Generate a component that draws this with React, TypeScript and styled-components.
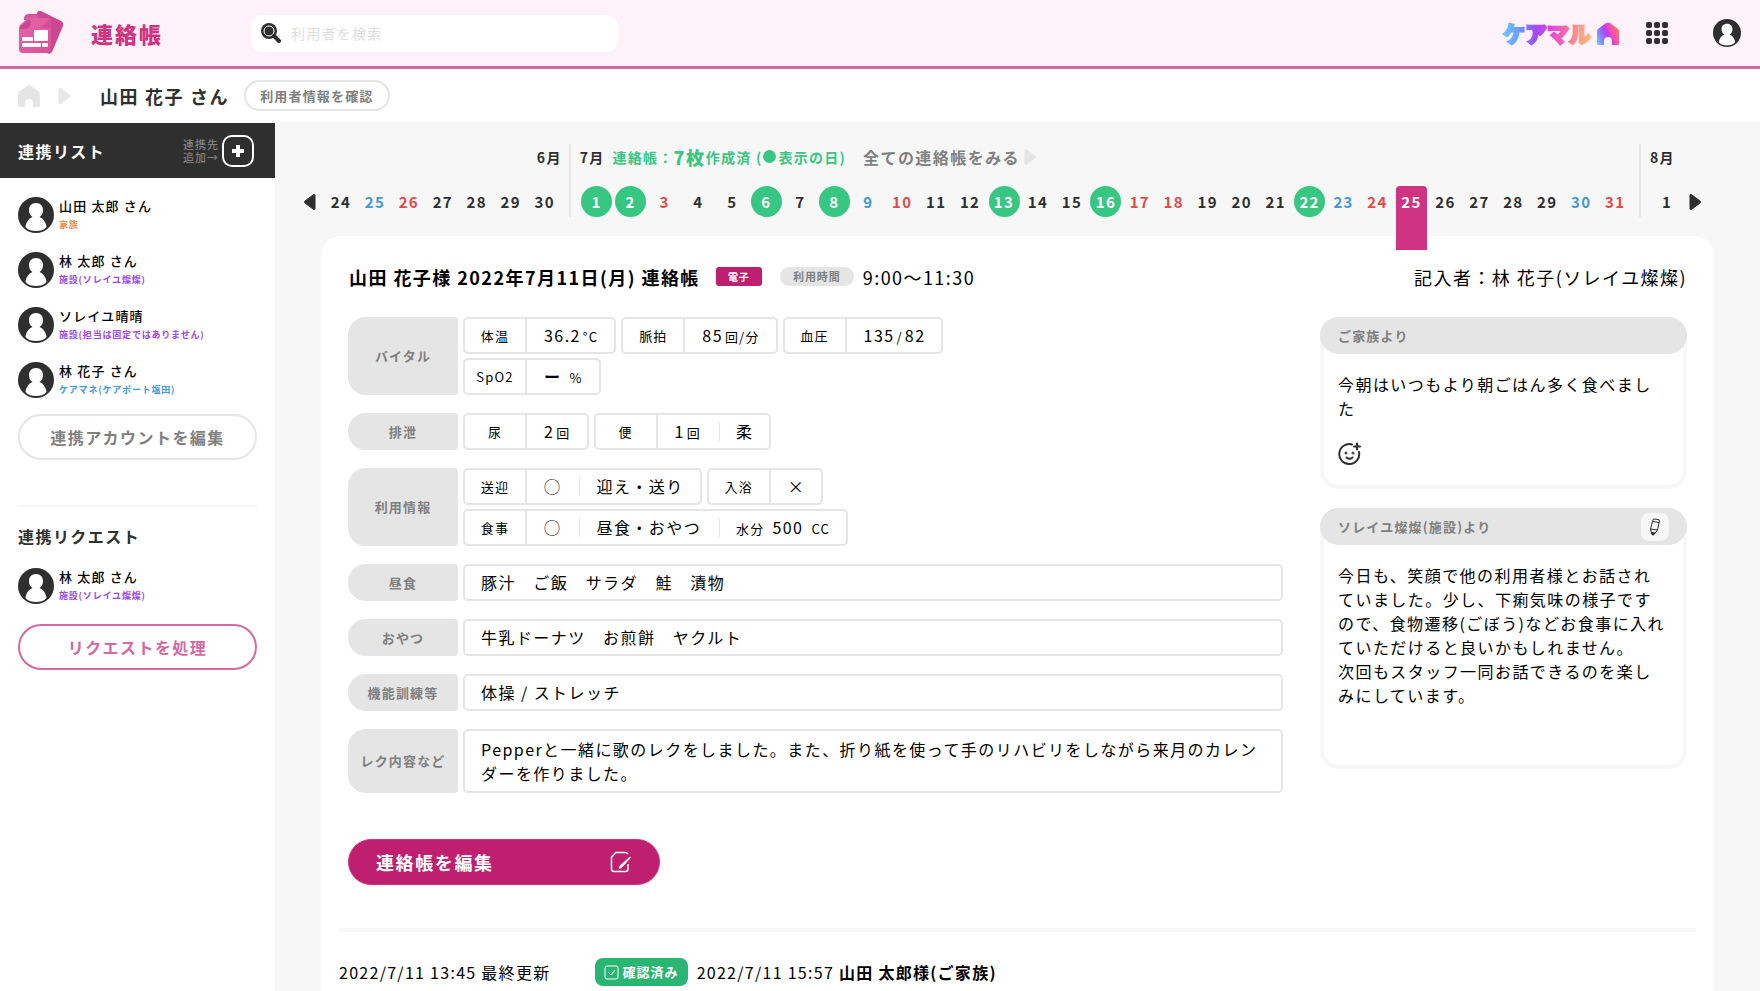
import React from "react";
import styled, { createGlobalStyle, css } from "styled-components";

const color = {
  ink: "#2f2f2f",
  gray: "#808080",
  line: "#e5e5e5",
  pale: "#f7f7f7",
  pink: "#cf3482",
  deepPink: "#be206f",
  softPink: "#d469a1",
  green: "#37c782",
  blue: "#4299d5",
  red: "#e04a48",
  purple: "#a044ee",
  orange: "#ee8d3c",
};

const GlobalStyle = createGlobalStyle`
  * { box-sizing: border-box; letter-spacing: 0.09em; }
  body {
    margin: 0;
    background: #fff;
    color: #000;
    font-family: "Noto Sans CJK JP", "Noto Sans", sans-serif;
    font-size: 16px;
    line-height: 24px;
  }
  button, input { font-family: inherit; color: inherit; }
  button { padding: 0; border: 0; background: none; cursor: pointer; }
  a { color: inherit; text-decoration: none; }
  h1, h2, h3, p, ul, dl, dd { margin: 0; padding: 0; font-size: inherit; font-weight: inherit; }
  ul { list-style: none; }
  svg { display: block; flex: none; }
`;

/* ---------- icons ---------- */

const AppLogo = () => (
  <svg width="46" height="46" viewBox="0 0 46 46" aria-hidden="true">
    <defs>
      <linearGradient id="sheet" x1="0" y1="0" x2="1" y2="1">
        <stop offset="0" stopColor="#e566a6" />
        <stop offset="1" stopColor="#d9509a" />
      </linearGradient>
    </defs>
    <path d="M18 3 q1-3 4-2 L42 11 q3 2 2 5 L33 42 q-2 3-5 1 L14 20 Z" fill="#cb4790" />
    <path d="M5 9 q0-5 5-5 h8 l4 6 H5 Z" fill="#d3559a" />
    <path d="M9 8 H28 q4 0 4 4 V39 q0 4-4 4 H4 q-4 0-4-4 V18 q0-2 1-3 Z" fill="url(#sheet)" />
    <path d="M10 9 q3 3 1 7 q-2 3-6 3 H1 q0-2 1-3 Z" fill="#c94590" />
    <path d="M21 18 L31 9 q1 1 1 3 v6 Z" fill="#cf4d95" opacity="0.7" />
    <rect x="15" y="20" width="14" height="11" rx="1" fill="#fff" />
    <rect x="3" y="27" width="11" height="4" rx="1" fill="#fff" />
    <rect x="3" y="33" width="19" height="4" rx="1" fill="#fff" />
    <rect x="23" y="33" width="6" height="4" rx="1" fill="#fff" />
  </svg>
);

const SearchIcon = () => (
  <svg width="20" height="20" viewBox="0 0 20 20" aria-hidden="true">
    <circle cx="8" cy="8" r="8" fill={color.ink} />
    <circle cx="8" cy="8" r="5" fill="none" stroke="#fff" strokeWidth="1" />
    <path d="M13 13 L18 18" stroke={color.ink} strokeWidth="4" strokeLinecap="round" />
  </svg>
);

const BrandText = styled.text`
  font-size: 22px;
  font-weight: 900;
  letter-spacing: 0;
  fill: url(#word);
  stroke: url(#word);
  stroke-width: 2px;
`;

const BrandMark = () => (
  <svg width="120" height="40" viewBox="-2 -7 120 40" role="img" aria-label="ケアマル">
    <defs>
      <linearGradient id="word" gradientUnits="userSpaceOnUse" x1="0" y1="8" x2="90" y2="14">
        <stop offset="0" stopColor="#6cc8ff" />
        <stop offset="0.2" stopColor="#6f95fb" />
        <stop offset="0.36" stopColor="#a04cf4" />
        <stop offset="0.52" stopColor="#dc46dc" />
        <stop offset="0.7" stopColor="#fa6aa6" />
        <stop offset="0.85" stopColor="#fb9c8c" />
        <stop offset="1" stopColor="#fbc06f" />
      </linearGradient>
      <linearGradient id="roof" x1="0" y1="1" x2="1" y2="0.6">
        <stop offset="0" stopColor="#67dcfd" />
        <stop offset="0.3" stopColor="#8a7bfd" />
        <stop offset="0.55" stopColor="#b83cf6" />
        <stop offset="0.8" stopColor="#fb4fb0" />
        <stop offset="1" stopColor="#fc6a70" />
      </linearGradient>
    </defs>
    <BrandText x="0" y="22">ケアマル</BrandText>
    <path
      d="M95 25 q-1 0-1-1 V11 q0-1 1-2 L103 3 q2-1 4 0 L115 9 q1 1 1 2 V24 q0 1-1 1 H109 V21 a4 4 0 0 0 -8 0 V25 Z"
      fill="url(#roof)"
    />
  </svg>
);

const AppsIcon = () => (
  <svg width="24" height="24" viewBox="0 0 24 24" fill={color.ink} aria-hidden="true">
    {[1, 9, 17].flatMap((y) => [1, 9, 17].map((x) => <rect key={`${x}-${y}`} x={x} y={y} width="6" height="6" rx="2" />))}
  </svg>
);

const PersonIcon = ({ size }: { size: number }) => (
  <svg width={size} height={size} viewBox="0 0 36 36" aria-hidden="true">
    <circle cx="18" cy="18" r="18" fill={color.ink} />
    <path
      d="M18 6 C13.500 6 11 9 11 13 C11 16 12 18.500 14.500 20 C10.500 21.500 8 25.500 7.500 30 C10 33 14 34 18 34 C22 34 26 33 28.500 30 C28 25.500 25.500 21.500 21.500 20 C24 18.500 25 16 25 13 C25 9 22.500 6 18 6 Z"
      fill="#fff"
    />
  </svg>
);

const HomeIcon = () => (
  <svg width="22" height="22" viewBox="0 0 22 22" fill={color.line} aria-hidden="true">
    <path d="M9 1 q2-2 4 0 L20 6 q2 1 2 4 V20 q0 2-2 2 H15 V18 a4 4 0 0 0 -8 0 V22 H2 q-2 0-2-2 V10 q0-3 2-4 Z" />
  </svg>
);

const Triangle = ({ fill, flip }: { fill: string; flip?: boolean }) => (
  <svg width="13" height="18" viewBox="0 0 13 18" aria-hidden="true">
    <path
      d={flip ? "M12 2 v14 q-1 1-2 0 L2 10 q-1-1 0-2 L10 2 q1-1 2 0 Z" : "M1 2 v14 q1 1 2 0 L11 10 q1-1 0-2 L3 2 q-1-1-2 0 Z"}
      fill={fill}
      stroke={fill}
      strokeLinejoin="round"
    />
  </svg>
);

const PlusIcon = () => (
  <svg width="14" height="14" viewBox="0 0 14 14" aria-hidden="true">
    <path d="M7 1 V13 M1 7 H13" stroke="#fff" strokeWidth="4" strokeLinejoin="round" />
  </svg>
);

const SmileIcon = () => (
  <svg width="24" height="24" viewBox="0 0 24 24" fill="none" stroke={color.ink} strokeWidth="2" strokeLinecap="round" aria-hidden="true">
    <path d="M14 2.500 A10 10 0 1 0 21 10" />
    <path d="M8.500 15.500 q3 2.500 6 0" />
    <path d="M19 1.500 V7.500 M16 4.500 H22" />
    <circle cx="8" cy="11" r="0.500" />
    <circle cx="15" cy="11" r="0.500" />
  </svg>
);

const PencilIcon = () => (
  <svg width="12" height="18" viewBox="0 0 12 18" fill="none" stroke={color.ink} strokeWidth="1" strokeLinejoin="round" aria-hidden="true">
    <path d="M4 2 q0-1 1-1 L9 1.500 q1.500 0 1.500 1.500 L8.500 12 L4.500 17 q-1 .5-1.500-.5 L1.500 11 Z" />
    <path d="M4 3.500 L10 4.500 M1.500 11 L8.500 12" />
    <path d="M2.500 14.500 L6 15 L4 17 Z" fill={color.ink} />
  </svg>
);

const EditIcon = () => (
  <svg width="22" height="22" viewBox="0 0 22 22" fill="none" stroke="#fff" aria-hidden="true">
    <path d="M18 3 q-1-1.500-3-1.500 H6 L1.500 6 V18 q0 2.500 2.500 2.500 H15.500 q2.500 0 2.500-2.500 V13" strokeWidth="1.500" />
    <path d="M20 6.500 L12 15.500 L9.500 17 L11 14.500 Z" fill="#fff" strokeWidth="1.500" strokeLinejoin="round" />
  </svg>
);

const CheckIcon = () => (
  <svg width="15" height="15" viewBox="0 0 15 15" fill="none" stroke="#fff" aria-hidden="true">
    <rect x="1" y="1" width="13" height="13" rx="2" />
    <path d="M4.500 7.500 L7 10 L11 5" />
  </svg>
);

/* ---------- header ---------- */

const Page = styled.div`
  display: flex;
  flex-direction: column;
  min-height: 100vh;
`;

const Header = styled.header`
  display: flex;
  align-items: center;
  height: 69px;
  padding: 0 19px;
  background: #fcf2f8;
  border-bottom: 3px solid ${color.softPink};
`;

const AppTitle = styled.h1`
  width: 160px;
  margin-left: 26px;
  color: ${color.pink};
  font-size: 22px;
  font-weight: 900;
`;

const SearchBox = styled.label`
  display: flex;
  align-items: center;
  flex: 0 1 367px;
  gap: 8px;
  height: 37px;
  padding: 0 10px;
  background: #fff;
  border-radius: 12px;
`;

const SearchInput = styled.input`
  flex: 1;
  min-width: 0;
  border: 0;
  outline: 0;
  background: none;
  font-size: 14px;
  &::placeholder { color: #dedede; opacity: 1; }
`;

const HeaderTools = styled.div`
  display: flex;
  align-items: center;
  margin-left: auto;
`;

const BrandLink = styled.a`
  margin-right: 24px;
`;

const IconButton = styled.button`
  display: flex;
  & + & { margin-left: 44px; }
`;

const SubHeader = styled.div`
  display: flex;
  align-items: center;
  height: 53px;
  padding: 0 18px;
`;

const Crumb = styled.a`
  display: flex;
  align-items: center;
  gap: 18px;
`;

const UserName = styled.h2`
  margin: 0 15px 0 29px;
  color: ${color.ink};
  font-size: 18px;
  font-weight: 700;
`;

const InfoButton = styled.button`
  height: 31px;
  padding: 0 14px;
  border: 2px solid ${color.line};
  border-radius: 16px;
  color: ${color.gray};
  font-size: 13px;
  font-weight: 700;
`;

/* ---------- sidebar ---------- */

const Body = styled.div`
  display: flex;
  flex: 1;
`;

const Sidebar = styled.aside`
  flex: 0 0 275px;
  padding-top: 1px;
  background: #fff;
`;

const SidebarHead = styled.div`
  display: flex;
  align-items: center;
  height: 55px;
  margin-bottom: 19px;
  padding: 0 21px 0 18px;
  background: ${color.ink};
  color: #fff;
`;

const SideTitle = styled.h3`
  flex: 1;
  font-size: 16px;
  font-weight: 700;
`;

const AddHint = styled.span`
  margin-right: 3px;
  color: ${color.gray};
  font-size: 11px;
  font-weight: 500;
  line-height: 13px;
`;

const AddButton = styled.button`
  display: flex;
  align-items: center;
  justify-content: center;
  width: 32px;
  height: 32px;
  border: 2px solid #fff;
  border-radius: 10px;
`;

const SideSection = styled.section`
  display: flex;
  flex-direction: column;
  gap: 16px;
  margin: 0 18px;
  padding-bottom: 45px;
  & + & {
    gap: 20px;
    padding-top: 17px;
    border-top: 2px solid ${color.pale};
    color: ${color.ink};
  }
`;

const AccountList = styled.ul`
  display: flex;
  flex-direction: column;
  gap: 19px;
`;

const Account = styled.li`
  display: flex;
  align-items: center;
  gap: 5px;
  height: 36px;
`;

const AccountName = styled.p`
  color: #000;
  font-size: 13px;
  font-weight: 500;
  line-height: 20px;
`;

const AccountRole = styled.p<{ $tone: string }>`
  color: ${(p) => p.$tone};
  font-size: 9px;
  font-weight: 700;
  line-height: 18px;
`;

const SideButton = styled.button<{ $pink?: boolean }>`
  height: 46px;
  border: 2px solid ${(p) => (p.$pink ? color.softPink : color.line)};
  border-radius: 23px;
  color: ${(p) => (p.$pink ? color.softPink : color.gray)};
  font-size: 16px;
  font-weight: 700;
`;

/* ---------- calendar ---------- */

const Main = styled.main`
  display: flex;
  flex: 1;
  flex-direction: column;
  min-width: 0;
  background: ${color.pale};
`;

const Calendar = styled.nav`
  display: flex;
  align-items: flex-end;
  padding: 22px 58px 0 28px;
`;

const Arrow = styled.button`
  display: flex;
  align-items: center;
  height: 31px;
  margin-bottom: 19px;
`;

const Months = styled.div`
  display: flex;
  flex: 1;
  gap: 7px;
  padding: 0 5px 0 8px;
`;

const Month = styled.section<{ $days: number; $ruled?: boolean }>`
  flex: ${(p) => p.$days} 1 0;
  height: 73px;
  margin-bottom: 19px;
  ${(p) =>
    p.$ruled &&
    css`
      padding-left: 9px;
      border-left: 2px solid ${color.line};
    `}
`;

const MonthHead = styled.div<{ $end?: boolean }>`
  display: flex;
  align-items: center;
  justify-content: ${(p) => (p.$end ? "flex-end" : "flex-start")};
  height: 25px;
  margin-bottom: 17px;
  white-space: nowrap;
`;

const MonthName = styled.h3`
  color: ${color.ink};
  font-size: 14px;
  font-weight: 700;
`;

const Summary = styled.p`
  display: flex;
  align-items: center;
  margin: 0 17px 0 8px;
  color: ${color.green};
  font-size: 14px;
  font-weight: 700;
`;

const SummaryCount = styled.strong`
  font-size: 18px;
`;

const Dot = styled.i`
  width: 13px;
  height: 13px;
  margin: 0 2px 0 1px;
  border-radius: 50%;
  background: ${color.green};
`;

const AllLink = styled.a`
  display: flex;
  align-items: center;
  gap: 4px;
  color: ${color.gray};
  font-size: 16px;
  font-weight: 700;
`;

const Days = styled.div`
  display: flex;
`;

const DayCell = styled.div`
  display: flex;
  flex: 1 1 0;
  justify-content: center;
  min-width: 0;
  height: 31px;
`;

const dayColor = { normal: color.ink, sat: color.blue, sun: color.red, filled: "#fff", current: "#fff" };
type DayKind = keyof typeof dayColor;

const Day = styled.button<{ $kind: DayKind }>`
  flex: none;
  width: 31px;
  height: 31px;
  color: ${(p) => dayColor[p.$kind]};
  font-size: 15px;
  font-weight: 700;
  line-height: 31px;
  ${(p) =>
    p.$kind === "filled" &&
    css`
      border-radius: 50%;
      background: ${color.green};
    `}
  ${(p) =>
    p.$kind === "current" &&
    css`
      position: relative;
      height: 64px;
      padding-bottom: 33px;
      border-radius: 4px 4px 0 0;
      background: ${color.pink};
    `}
`;

/* ---------- note card ---------- */

const Card = styled.article`
  flex: 1;
  margin: 0 46px;
  padding: 0 18px;
  background: #fff;
  border-radius: 20px 20px 0 0;
`;

const CardHead = styled.header`
  display: flex;
  align-items: center;
  height: 81px;
  padding: 0 9px 0 10px;
  font-size: 18px;
  & > * { letter-spacing: 0.08em; }
`;

const CardTitle = styled.h2`
  margin-right: 16px;
  font-weight: 700;
`;

const KindTag = styled.span`
  width: 46px;
  margin-right: 18px;
  background: ${color.deepPink};
  border-radius: 3px;
  color: #fff;
  font-size: 10px;
  font-weight: 700;
  line-height: 19px;
  text-align: center;
`;

const TimeTag = styled.span`
  width: 74px;
  margin-right: 9px;
  background: ${color.line};
  border-radius: 10px;
  color: ${color.gray};
  font-size: 11px;
  font-weight: 700;
  line-height: 19px;
  text-align: center;
`;

const Author = styled.p`
  margin-left: auto;
`;

const Columns = styled.div`
  display: grid;
  grid-template-columns: minmax(0, 1fr) 367px;
  gap: 37px;
  padding: 0 9px;
`;

const Records = styled.div`
  display: flex;
  flex-direction: column;
  gap: 18px;
`;

const Record = styled.section`
  display: grid;
  grid-template-columns: 110px minmax(0, 1fr);
  gap: 5px;
`;

const RecordName = styled.h3`
  display: flex;
  align-items: center;
  justify-content: center;
  background: ${color.line};
  border-radius: 18px 4px 4px 18px;
  color: ${color.gray};
  font-size: 13px;
  font-weight: 700;
`;

const Lines = styled.div`
  display: flex;
  flex-direction: column;
  gap: 4px;
`;

const Line = styled.div`
  display: flex;
  gap: 5px;
`;

const Field = styled.dl`
  display: flex;
  height: 37px;
  border: 2px solid ${color.line};
  border-radius: 5px;
  line-height: 33px;
`;

const FieldName = styled.dt`
  width: 62px;
  border-right: 2px solid ${color.line};
  font-size: 13px;
  text-align: center;
`;

const FieldValue = styled.dd`
  display: flex;
  align-items: center;
`;

const Part = styled.span<{ $loose?: boolean }>`
  position: relative;
  display: flex;
  align-items: baseline;
  gap: ${(p) => (p.$loose ? "8px" : "2px")};
  padding: 0 16px 0 17px;
  &:not(:last-child) { padding-right: 18px; }
  &:not(:first-child)::before {
    content: "";
    position: absolute;
    left: 0;
    top: 7px;
    width: 1px;
    height: 19px;
    background: ${color.line};
  }
`;

const Unit = styled.small`
  font-size: 13px;
`;

const NoValue = styled.strong`
  font-weight: 700;
`;

const TextField = styled.p`
  padding: 4px 16px 5px;
  border: 2px solid ${color.line};
  border-radius: 5px;
`;

const LongTextField = styled(TextField)`
  padding: 6px 16px;
`;

const Messages = styled.div`
  display: flex;
  flex-direction: column;
  gap: 19px;
`;

const Message = styled.section`
  border-radius: 19px;
  background: ${color.pale};
`;

const MessageHead = styled.div`
  position: relative;
  display: flex;
  align-items: center;
  justify-content: space-between;
  height: 37px;
  padding: 0 18px;
  background: ${color.line};
  border-radius: 19px;
  color: ${color.gray};
`;

const MessageTitle = styled.h3`
  font-size: 13px;
  font-weight: 700;
`;

const MessageBody = styled.div<{ $tall?: boolean }>`
  min-height: ${(p) => (p.$tall ? "242px" : "153px")};
  margin-top: -18px;
  padding: 36px 16px 19px 14px;
  border: 4px solid ${color.pale};
  border-top: 0;
  border-radius: 0 0 19px 19px;
  background: #fff;
`;

const MessageText = styled.p`
  margin-bottom: 22px;
`;

const PencilButton = styled.button`
  display: flex;
  align-items: center;
  justify-content: center;
  width: 28px;
  height: 28px;
  border-radius: 8px;
  background: ${color.pale};
`;

const EditButton = styled.button`
  display: flex;
  align-items: center;
  justify-content: space-between;
  width: 312px;
  height: 46px;
  margin: 46px 9px 43px;
  padding: 0 27px;
  background: ${color.deepPink};
  border: 1px solid ${color.pink};
  border-radius: 23px;
  color: #fff;
  font-size: 18px;
  font-weight: 700;
`;

const CardFoot = styled.footer`
  display: flex;
  align-items: center;
  height: 62px;
  padding-top: 22px;
  border-top: 4px solid ${color.pale};
  & * { letter-spacing: 0.08em; }
`;

const Confirmed = styled.span`
  display: flex;
  align-items: center;
  gap: 3px;
  height: 28px;
  margin: 0 9px 0 45px;
  padding: 0 9px;
  background: #2bb573;
  border-radius: 8px;
  color: #fff;
  font-size: 13px;
  font-weight: 700;
`;

const Confirmer = styled.strong`
  font-weight: 700;
`;

/* ---------- data ---------- */

const accounts = [
  { name: "山田 太郎 さん", role: "家族", tone: color.orange },
  { name: "林 太郎 さん", role: "施設(ソレイユ燦燦)", tone: color.purple },
  { name: "ソレイユ晴晴", role: "施設(担当は固定ではありません)", tone: color.purple },
  { name: "林 花子 さん", role: "ケアマネ(ケアポート塩田)", tone: color.blue },
];

const requests = [{ name: "林 太郎 さん", role: "施設(ソレイユ燦燦)", tone: color.purple }];

const range = (from: number, to: number) => Array.from({ length: to - from + 1 }, (_, i) => from + i);

const june: Record<number, DayKind> = { 25: "sat", 26: "sun" };
const july: Record<number, DayKind> = {
  1: "filled", 2: "filled", 3: "sun", 6: "filled", 8: "filled", 9: "sat", 10: "sun", 13: "filled",
  16: "filled", 17: "sun", 18: "sun", 22: "filled", 23: "sat", 24: "sun", 25: "current", 30: "sat", 31: "sun",
};

const DayRow = ({ days, kinds }: { days: number[]; kinds: Record<number, DayKind> }) => (
  <Days>
    {days.map((d) => (
      <DayCell key={d}>
        <Day type="button" $kind={kinds[d] ?? "normal"}>{d}</Day>
      </DayCell>
    ))}
  </Days>
);

const Accounts = ({ items }: { items: typeof accounts }) => (
  <AccountList>
    {items.map((a) => (
      <Account key={a.name}>
        <PersonIcon size={36} />
        <div>
          <AccountName>{a.name}</AccountName>
          <AccountRole $tone={a.tone}>{a.role}</AccountRole>
        </div>
      </Account>
    ))}
  </AccountList>
);

const Item = ({ name, children }: { name: string; children: React.ReactNode }) => (
  <Field>
    <FieldName>{name}</FieldName>
    <FieldValue>{children}</FieldValue>
  </Field>
);

export default function App() {
  return (
    <Page>
      <GlobalStyle />
      <Header>
        <AppLogo />
        <AppTitle>連絡帳</AppTitle>
        <SearchBox>
          <SearchIcon />
          <SearchInput type="search" aria-label="利用者を検索" placeholder="利用者を検索" />
        </SearchBox>
        <HeaderTools>
          <BrandLink href="#top"><BrandMark /></BrandLink>
          <IconButton type="button" aria-label="アプリ一覧"><AppsIcon /></IconButton>
          <IconButton type="button" aria-label="アカウント"><PersonIcon size={28} /></IconButton>
        </HeaderTools>
      </Header>
      <SubHeader>
        <Crumb href="#home" aria-label="ホーム">
          <HomeIcon />
          <Triangle fill={color.line} />
        </Crumb>
        <UserName>山田 花子 さん</UserName>
        <InfoButton type="button">利用者情報を確認</InfoButton>
      </SubHeader>
      <Body>
        <Sidebar>
          <SidebarHead>
            <SideTitle>連携リスト</SideTitle>
            <AddHint>連携先<br />追加→</AddHint>
            <AddButton type="button" aria-label="連携先を追加"><PlusIcon /></AddButton>
          </SidebarHead>
          <SideSection>
            <Accounts items={accounts} />
            <SideButton type="button">連携アカウントを編集</SideButton>
          </SideSection>
          <SideSection>
            <SideTitle>連携リクエスト</SideTitle>
            <Accounts items={requests} />
            <SideButton type="button" $pink>リクエストを処理</SideButton>
          </SideSection>
        </Sidebar>
        <Main>
          <Calendar aria-label="カレンダー">
            <Arrow type="button" aria-label="前へ"><Triangle fill={color.ink} flip /></Arrow>
            <Months>
              <Month $days={7}>
                <MonthHead $end><MonthName>6月</MonthName></MonthHead>
                <DayRow days={range(24, 30)} kinds={june} />
              </Month>
              <Month $days={31} $ruled>
                <MonthHead>
                  <MonthName>7月</MonthName>
                  <Summary>
                    連絡帳：<SummaryCount>7枚</SummaryCount>作成済&nbsp;(<Dot />表示の日)
                  </Summary>
                  <AllLink href="#all">全ての連絡帳をみる<Triangle fill={color.line} /></AllLink>
                </MonthHead>
                <DayRow days={range(1, 31)} kinds={july} />
              </Month>
              <Month $days={1} $ruled>
                <MonthHead><MonthName>8月</MonthName></MonthHead>
                <DayRow days={[1]} kinds={{}} />
              </Month>
            </Months>
            <Arrow type="button" aria-label="次へ"><Triangle fill={color.ink} /></Arrow>
          </Calendar>
          <Card>
            <CardHead>
              <CardTitle>山田 花子様 2022年7月11日(月) 連絡帳</CardTitle>
              <KindTag>電子</KindTag>
              <TimeTag>利用時間</TimeTag>
              <p>9:00〜11:30</p>
              <Author>記入者：林 花子(ソレイユ燦燦)</Author>
            </CardHead>
            <Columns>
              <Records>
                <Record>
                  <RecordName>バイタル</RecordName>
                  <Lines>
                    <Line>
                      <Item name="体温"><Part>36.2<Unit>°C</Unit></Part></Item>
                      <Item name="脈拍"><Part>85<Unit>回/分</Unit></Part></Item>
                      <Item name="血圧"><Part>135<Unit>/</Unit>82</Part></Item>
                    </Line>
                    <Line>
                      <Item name="SpO2"><Part $loose><NoValue>ー</NoValue><Unit>%</Unit></Part></Item>
                    </Line>
                  </Lines>
                </Record>
                <Record>
                  <RecordName>排泄</RecordName>
                  <Line>
                    <Item name="尿"><Part>2<Unit>回</Unit></Part></Item>
                    <Item name="便"><Part>1<Unit>回</Unit></Part><Part>柔</Part></Item>
                  </Line>
                </Record>
                <Record>
                  <RecordName>利用情報</RecordName>
                  <Lines>
                    <Line>
                      <Item name="送迎"><Part>◯</Part><Part>迎え・送り</Part></Item>
                      <Item name="入浴"><Part>×</Part></Item>
                    </Line>
                    <Line>
                      <Item name="食事">
                        <Part>◯</Part>
                        <Part>昼食・おやつ</Part>
                        <Part $loose><Unit>水分</Unit>500<Unit>CC</Unit></Part>
                      </Item>
                    </Line>
                  </Lines>
                </Record>
                <Record>
                  <RecordName>昼食</RecordName>
                  <TextField>豚汁　ご飯　サラダ　鮭　漬物</TextField>
                </Record>
                <Record>
                  <RecordName>おやつ</RecordName>
                  <TextField>牛乳ドーナツ　お煎餅　ヤクルト</TextField>
                </Record>
                <Record>
                  <RecordName>機能訓練等</RecordName>
                  <TextField>体操 / ストレッチ</TextField>
                </Record>
                <Record>
                  <RecordName>レク内容など</RecordName>
                  <LongTextField>
                    Pepperと一緒に歌のレクをしました。また、折り紙を使って手のリハビリをしながら来月のカレンダーを作りました。
                  </LongTextField>
                </Record>
              </Records>
              <Messages>
                <Message>
                  <MessageHead><MessageTitle>ご家族より</MessageTitle></MessageHead>
                  <MessageBody>
                    <MessageText>今朝はいつもより朝ごはん多く食べました</MessageText>
                    <IconButton type="button" aria-label="リアクションを追加"><SmileIcon /></IconButton>
                  </MessageBody>
                </Message>
                <Message>
                  <MessageHead>
                    <MessageTitle>ソレイユ燦燦(施設)より</MessageTitle>
                    <PencilButton type="button" aria-label="編集"><PencilIcon /></PencilButton>
                  </MessageHead>
                  <MessageBody $tall>
                    <MessageText>
                      今日も、笑顔で他の利用者様とお話されていました。少し、下痢気味の様子ですので、食物遷移(ごぼう)などお食事に入れていただけると良いかもしれません。<br />
                      次回もスタッフ一同お話できるのを楽しみにしています。
                    </MessageText>
                  </MessageBody>
                </Message>
              </Messages>
            </Columns>
            <EditButton type="button">連絡帳を編集<EditIcon /></EditButton>
            <CardFoot>
              <p>2022/7/11 13:45 最終更新</p>
              <Confirmed><CheckIcon />確認済み</Confirmed>
              <p>2022/7/11 15:57 <Confirmer>山田 太郎様(ご家族)</Confirmer></p>
            </CardFoot>
          </Card>
        </Main>
      </Body>
    </Page>
  );
}
